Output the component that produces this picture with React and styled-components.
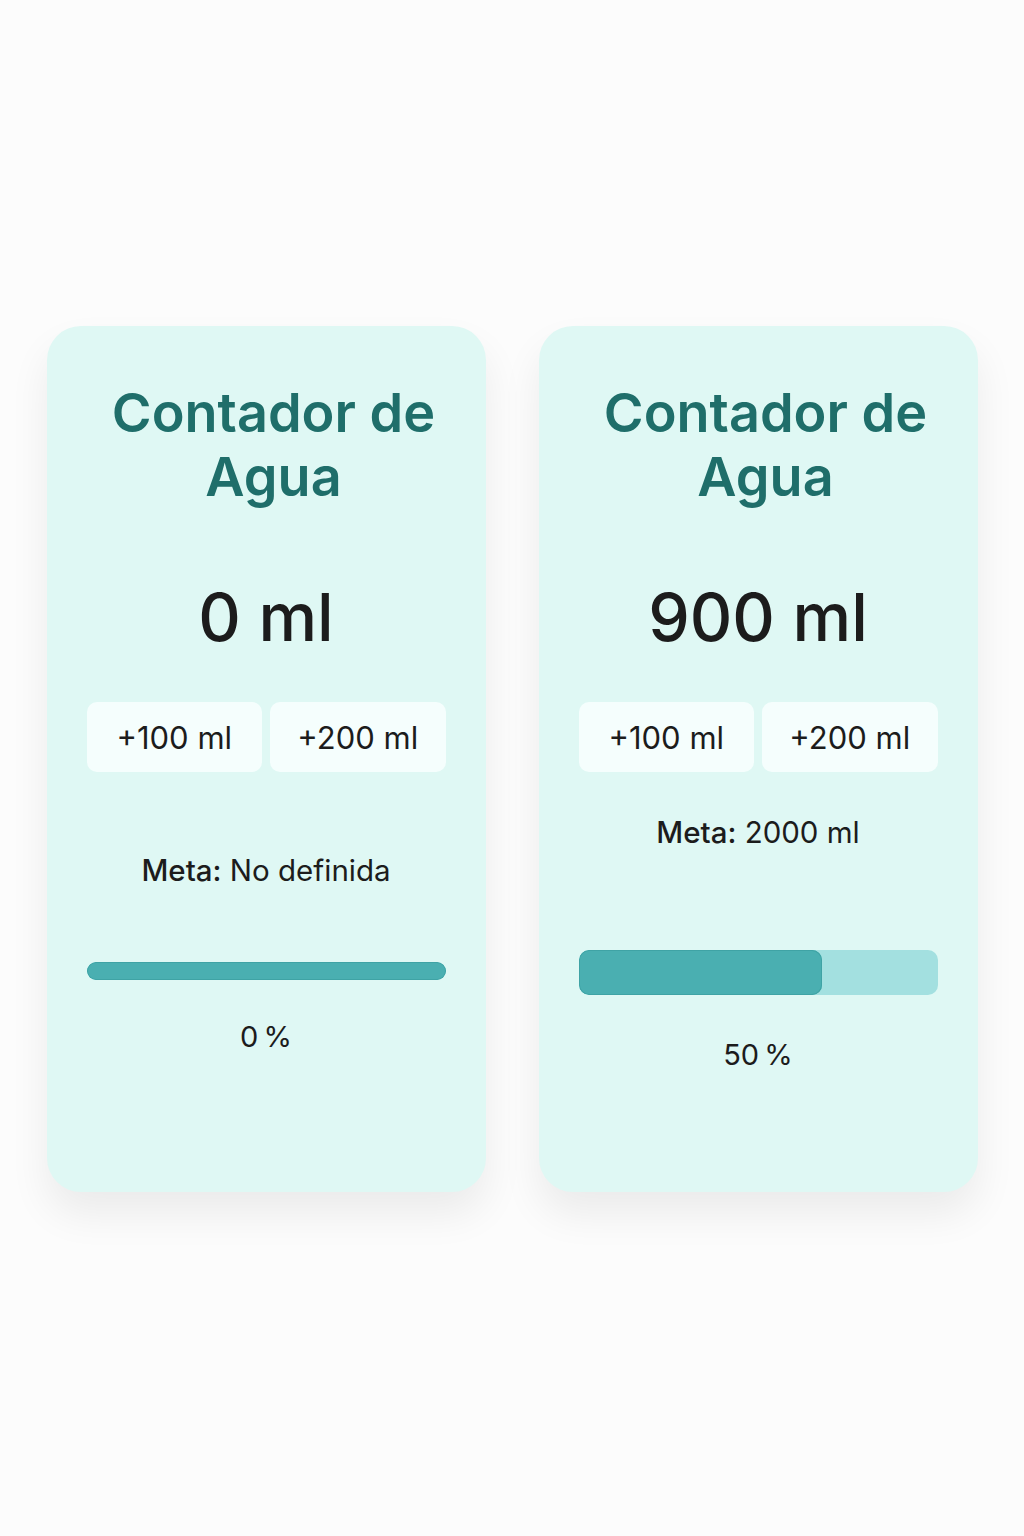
import React from 'react'
import styled, { createGlobalStyle } from 'styled-components'

const Global = createGlobalStyle`
  body { margin: 0; background: #fcfcfc; font-family: Inter, "Noto Sans", sans-serif; color: #1c1c1c; }
`

const Page = styled.div`
  min-height: 1536px;
  display: flex;
  justify-content: center;
  align-items: flex-start;
  gap: 53px;
  padding-top: 326px;
  box-sizing: border-box;
`

const Card = styled.div`
  width: 439px;
  height: 866px;
  box-sizing: border-box;
  padding: 55px 40px 0;
  background: #dff8f4;
  border-radius: 34px;
  box-shadow: 0 22px 40px rgba(0, 0, 0, 0.07);
  display: flex;
  flex-direction: column;
  align-items: stretch;
  text-align: center;
`

const Title = styled.h1`
  margin: 0;
  padding-left: 15px;
  font-size: 54px;
  line-height: 64px;
  font-weight: 600;
  color: #1f6e6a;
`

const Amount = styled.div`
  margin-top: 72px;
  font-size: 66px;
  line-height: 72px;
  font-weight: 500;
  color: #1c1c1c;
`

const Buttons = styled.div`
  margin-top: 49px;
  display: grid;
  grid-template-columns: 1fr 1fr;
  gap: 8px;
`

const AddButton = styled.button`
  height: 70px;
  border: none;
  border-radius: 10px;
  background: #f5fefd;
  font-family: inherit;
  font-size: 31px;
  color: #1c1c1c;
  cursor: pointer;
`

const Goal = styled.div`
  margin-top: ${p => p.$gap}px;
  font-size: 29.5px;
  line-height: 34px;
  b { font-weight: 500; }
`

const Track = styled.div`
  margin-top: ${p => p.$gap}px;
  height: ${p => p.$h}px;
  border-radius: ${p => (p.$h > 30 ? 10 : 9)}px;
  background: #a3e0e0;
  overflow: hidden;
  display: flex;
`

const Fill = styled.div`
  height: 100%;
  background: #4aafb1;
  border-radius: 10px;
  box-shadow: inset 0 0 0 1px #3fa3a5;
`

const Percent = styled.div`
  margin-top: ${p => p.$gap}px;
  font-size: 29px;
  line-height: 34px;
`

function Counter({ amount, goal, goalGap, barGap, barH, fill, pctGap, pct }) {
  return (
    <Card>
      <Title>Contador de<br />Agua</Title>
      <Amount>{amount} ml</Amount>
      <Buttons>
        <AddButton>+100 ml</AddButton>
        <AddButton>+200 ml</AddButton>
      </Buttons>
      <Goal $gap={goalGap}><b>Meta:</b> {goal}</Goal>
      <Track $gap={barGap} $h={barH}>
        <Fill style={{ width: `${fill}%` }} />
      </Track>
      <Percent $gap={pctGap}>{pct}&#8201;%</Percent>
    </Card>
  )
}

export default function App() {
  return (
    <>
      <Global />
      <Page>
        <Counter amount={0} goal="No definida" goalGap={81} barGap={75} barH={18} fill={100} pctGap={40} pct={0} />
        <Counter amount={900} goal="2000 ml" goalGap={43} barGap={101} barH={45} fill={67.7} pctGap={43} pct={50} />
      </Page>
    </>
  )
}
